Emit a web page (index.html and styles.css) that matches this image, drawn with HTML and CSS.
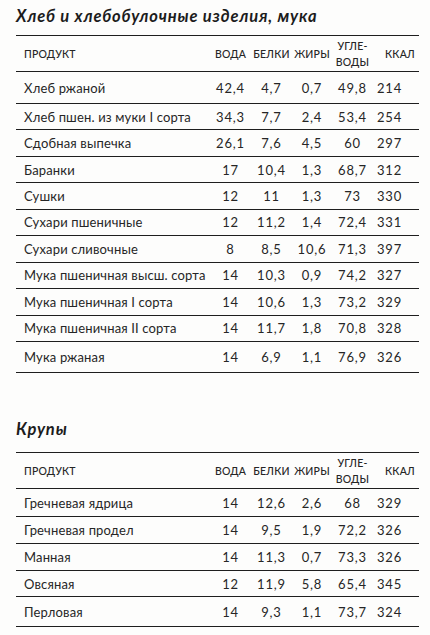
FILE: index.html
```html
<!DOCTYPE html>
<html lang="ru">
<head>
<meta charset="utf-8">
<title>Хлеб и крупы</title>
<link rel="stylesheet" href="styles.css">
</head>
<body>
<section class="sec sec-a">
  <h2 class="title">Хлеб и хлебобулочные изделия, мука</h2>
  <div class="tbl">
    <div class="row head">
      <div class="c name">ПРОДУКТ</div>
      <div class="c num">ВОДА</div>
      <div class="c num">БЕЛКИ</div>
      <div class="c num">ЖИРЫ</div>
      <div class="c num two">УГЛЕ-<br>ВОДЫ</div>
      <div class="c kcal">ККАЛ</div>
    </div>
    <div class="row a-first"><div class="c name">Хлеб ржаной</div><div class="c num">42,4</div><div class="c num">4,7</div><div class="c num">0,7</div><div class="c num">49,8</div><div class="c kcal">214</div></div>
    <div class="row a-mid"><div class="c name">Хлеб пшен. из муки I сорта</div><div class="c num">34,3</div><div class="c num">7,7</div><div class="c num">2,4</div><div class="c num">53,4</div><div class="c kcal">254</div></div>
    <div class="row a-mid"><div class="c name">Сдобная выпечка</div><div class="c num">26,1</div><div class="c num">7,6</div><div class="c num">4,5</div><div class="c num">60</div><div class="c kcal">297</div></div>
    <div class="row a-mid"><div class="c name">Баранки</div><div class="c num">17</div><div class="c num">10,4</div><div class="c num">1,3</div><div class="c num">68,7</div><div class="c kcal">312</div></div>
    <div class="row a-mid"><div class="c name">Сушки</div><div class="c num">12</div><div class="c num">11</div><div class="c num">1,3</div><div class="c num">73</div><div class="c kcal">330</div></div>
    <div class="row a-mid"><div class="c name">Сухари пшеничные</div><div class="c num">12</div><div class="c num">11,2</div><div class="c num">1,4</div><div class="c num">72,4</div><div class="c kcal">331</div></div>
    <div class="row a-mid"><div class="c name">Сухари сливочные</div><div class="c num">8</div><div class="c num">8,5</div><div class="c num">10,6</div><div class="c num">71,3</div><div class="c kcal">397</div></div>
    <div class="row a-mid"><div class="c name">Мука пшеничная высш. сорта</div><div class="c num">14</div><div class="c num">10,3</div><div class="c num">0,9</div><div class="c num">74,2</div><div class="c kcal">327</div></div>
    <div class="row a-mid"><div class="c name">Мука пшеничная I сорта</div><div class="c num">14</div><div class="c num">10,6</div><div class="c num">1,3</div><div class="c num">73,2</div><div class="c kcal">329</div></div>
    <div class="row a-mid"><div class="c name">Мука пшеничная II сорта</div><div class="c num">14</div><div class="c num">11,7</div><div class="c num">1,8</div><div class="c num">70,8</div><div class="c kcal">328</div></div>
    <div class="row a-last"><div class="c name">Мука ржаная</div><div class="c num">14</div><div class="c num">6,9</div><div class="c num">1,1</div><div class="c num">76,9</div><div class="c kcal">326</div></div>
  </div>
</section>
<section class="sec sec-b">
  <h2 class="title">Крупы</h2>
  <div class="tbl">
    <div class="row head">
      <div class="c name">ПРОДУКТ</div>
      <div class="c num">ВОДА</div>
      <div class="c num">БЕЛКИ</div>
      <div class="c num">ЖИРЫ</div>
      <div class="c num two">УГЛЕ-<br>ВОДЫ</div>
      <div class="c kcal">ККАЛ</div>
    </div>
    <div class="row b-first"><div class="c name">Гречневая ядрица</div><div class="c num">14</div><div class="c num">12,6</div><div class="c num">2,6</div><div class="c num">68</div><div class="c kcal">329</div></div>
    <div class="row b-mid"><div class="c name">Гречневая продел</div><div class="c num">14</div><div class="c num">9,5</div><div class="c num">1,9</div><div class="c num">72,2</div><div class="c kcal">326</div></div>
    <div class="row b-mid"><div class="c name">Манная</div><div class="c num">14</div><div class="c num">11,3</div><div class="c num">0,7</div><div class="c num">73,3</div><div class="c kcal">326</div></div>
    <div class="row b-mid"><div class="c name">Овсяная</div><div class="c num">12</div><div class="c num">11,9</div><div class="c num">5,8</div><div class="c num">65,4</div><div class="c kcal">345</div></div>
    <div class="row b-last"><div class="c name">Перловая</div><div class="c num">14</div><div class="c num">9,3</div><div class="c num">1,1</div><div class="c num">73,7</div><div class="c kcal">324</div></div>
  </div>
</section>
</body>
</html>
```
FILE: styles.css
```css
html, body {
  margin: 0;
  padding: 0;
  background: #fdfdfc;
}
body {
  width: 430px;
  font-family: Lato, "Open Sans", sans-serif;
  color: #262626;
}
.sec {
  padding-left: 16px;
  width: 403px;
}
.sec-a .title {
  padding-top: 6px;
  margin-bottom: 9px;
}
.sec-b {
  margin-top: 46px;
}
.sec-b .title {
  margin-bottom: 13.5px;
}
.title {
  margin: 0;
  font: italic 700 16.5px/20px Lato, sans-serif;
  color: #1c1c1c;
  letter-spacing: 0.85px;
}
.tbl {
  border-top: 1.5px solid #1e1e1e;
}
.row {
  display: grid;
  grid-template-columns: 194px 41px 41px 40px 41px 46px;
  align-items: center;
  box-sizing: border-box;
  border-bottom: 1.5px solid #1e1e1e;
  font-size: 13px;
  line-height: 16px;
}
.head {
  height: 36px;
  font-size: 10.5px;
  line-height: 16px;
  font-weight: 500;
  letter-spacing: 0.2px;
}
.a-first { height: 32px; }
.a-mid { height: 26.44px; }
.a-last { height: 31px; }
.b-first { height: 28px; }
.b-mid { height: 26.67px; }
.b-last { height: 30px; }
.name {
  padding-left: 8px;
  white-space: nowrap;
  letter-spacing: 0.15px;
}
.head .name { letter-spacing: 0.2px; }
.num {
  text-align: center;
  letter-spacing: 0.8px;
}
.head .num { letter-spacing: 0.2px; }
.two { line-height: 16px; }
.kcal {
  padding-left: 4px;
  letter-spacing: 0.8px;
}
.head .kcal {
  text-align: right;
  padding-left: 0;
  padding-right: 4px;
  letter-spacing: 0.2px;
}
```
